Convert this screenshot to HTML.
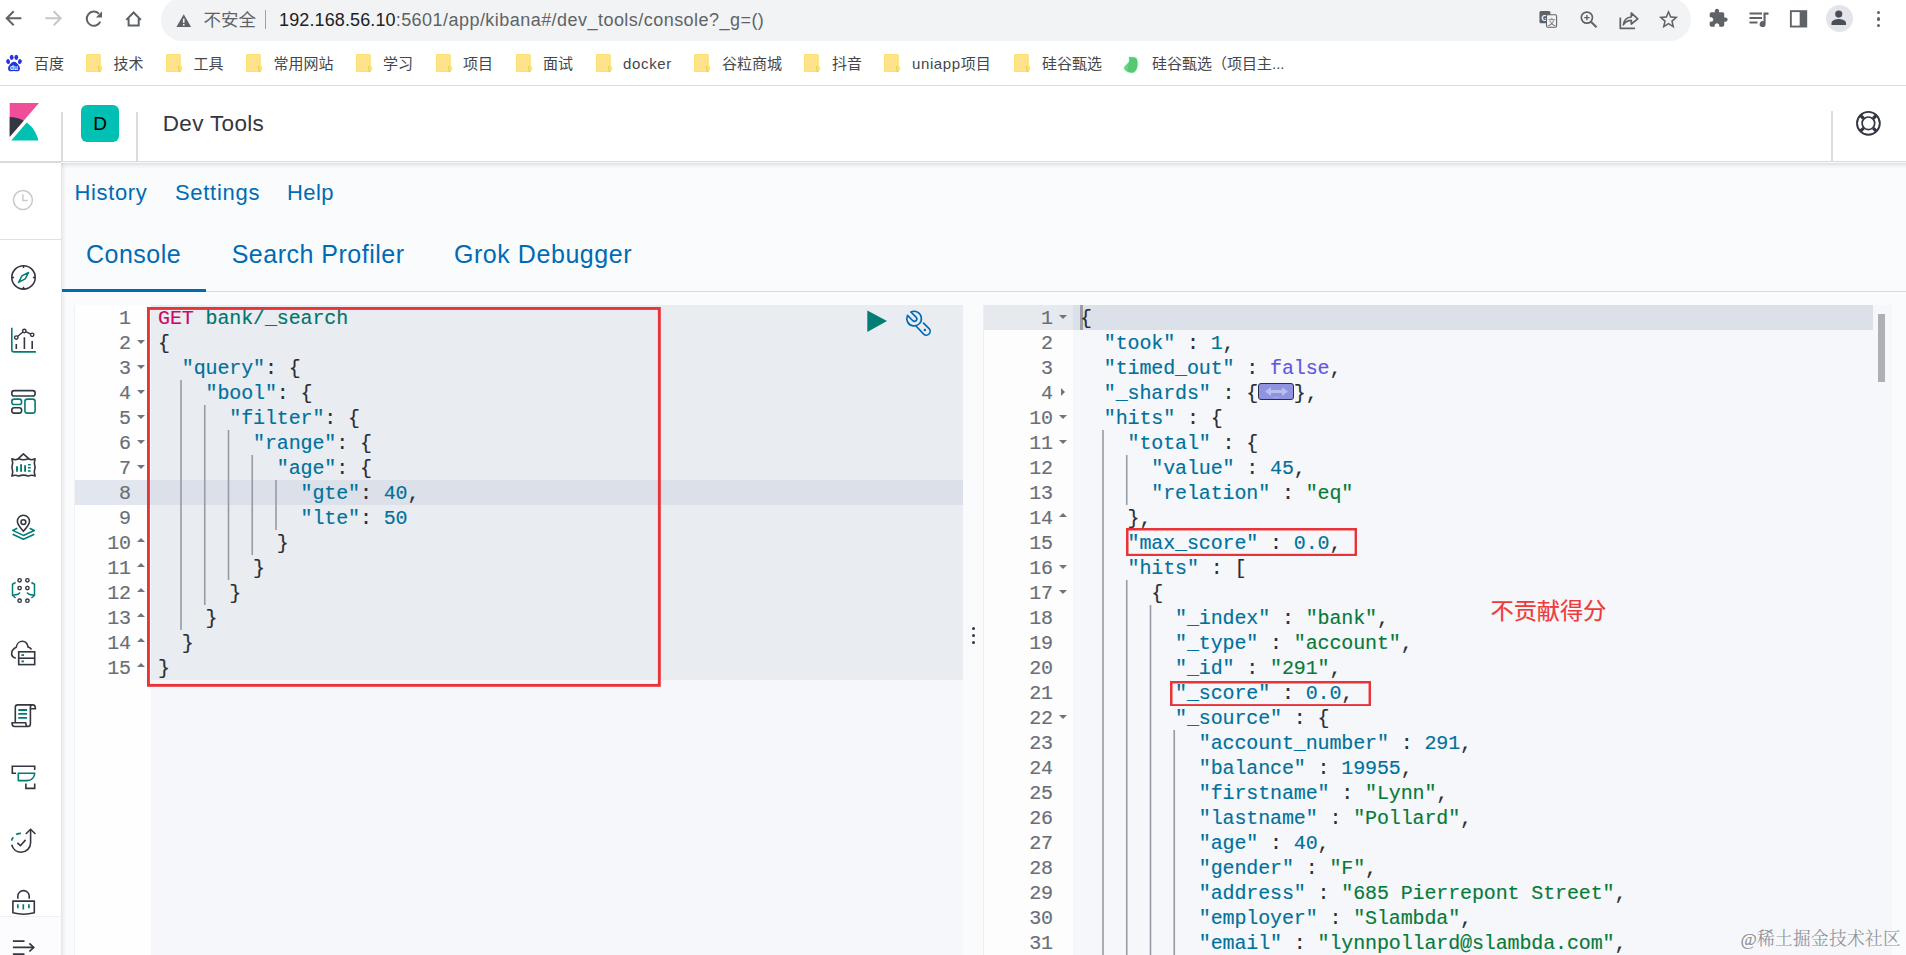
<!DOCTYPE html>
<html lang="zh-CN">
<head>
<meta charset="utf-8">
<title>Dev Tools - Kibana</title>
<style>
*{box-sizing:border-box}
html,body{margin:0;padding:0}
body{width:1906px;height:955px;position:relative;overflow:hidden;background:#fff;
 font-family:"Liberation Sans","Noto Sans CJK SC",sans-serif;color:#343741}
.abs,#chrome>*,#khead>*,#side>*,#main>*{position:absolute}
#chrome{position:absolute;left:0;top:0;width:1906px;height:86px;background:#fff}
#chrome>.line{left:0;top:85px;width:1906px;height:1px;background:#dadce0}
#pill{left:161px;top:-2px;width:1530px;height:42.5px;border-radius:21.25px;background:#f1f3f4}
.bm{top:52.8px;height:22px;line-height:22px;font-size:15px;color:#43474b;white-space:nowrap}
.fo{top:53.8px;width:16.5px;height:18.2px}
#khead{position:absolute;left:0;top:86px;width:1906px;height:76.6px;background:#fff}
#side{position:absolute;left:0;top:162.6px;width:61px;height:792.4px;background:#fff}
#main{position:absolute;left:61px;top:162px;width:1845px;height:793px;background:#fafbfd}
#main>*{position:absolute}
.lnk{color:#006bb4;white-space:nowrap}
/* editor */
#ed{position:absolute;left:0;top:0;width:1906px;height:955px;font-family:"Liberation Mono","DejaVu Sans Mono",monospace;font-size:20px;letter-spacing:-0.125px;-webkit-text-stroke:0.15px currentColor}
#ed>*{position:absolute}
.ln{height:25px;line-height:25px;text-align:right;color:#6b6e76;white-space:pre}
.cl{height:25px;line-height:25px;white-space:pre;color:#2b2d33}
.k,.n{color:#00719c}
.s{color:#087a3a}
.b{color:#5f58e0}
.m{color:#c80a68}
.u{color:#00756c}
.ig{width:1.6px;background:#969ba5}
.fd{width:0;height:0;border-left:4.2px solid transparent;border-right:4.2px solid transparent;border-top:4.6px solid #71747c}
.fu{width:0;height:0;border-left:4.2px solid transparent;border-right:4.2px solid transparent;border-bottom:4.6px solid #71747c}
.fr{width:0;height:0;border-top:4.2px solid transparent;border-bottom:4.2px solid transparent;border-left:4.6px solid #71747c}
.fold{display:inline-block;width:35.6px;height:17px;vertical-align:-1px;background:#8f93e0;border:1.5px solid #2b2d4e;border-radius:3px;position:relative;overflow:hidden}
.fold svg{position:absolute;left:-1.7px;top:-1.5px}
.rb{border:2.5px solid #ea3338;background:transparent}
</style>
</head>
<body>

<!-- ============ browser chrome ============ -->
<div id="chrome">
 <div id="pill"></div>
 <svg style="left:0;top:0" width="160" height="40" viewBox="0 0 160 40" fill="none" stroke-width="2">
  <path d="M21.400 18.300 H7.200 M13.700 11.300 L6.700 18.300 L13.700 25.300" stroke="#5f6368"/>
  <path d="M45.300 18.300 H60.300 M53.700 11.300 L60.700 18.300 L53.700 25.300" stroke="#c4c7cb"/>
  <path d="M100.300 21.600 A7.100 7.100 0 1 1 98.900 13.700" stroke="#5f6368"/>
  <path d="M102 11.300 V17.400 H95.900 Z" fill="#5f6368" stroke="none"/>
  <path d="M126.300 19.900 L133.600 12.500 L140.900 19.900 M128.600 18.500 V25.400 H138.700 V18.500" stroke="#5f6368"/>
 </svg>
 <svg style="left:176px;top:13.5px" width="15.5" height="13.5" viewBox="0 0 15.5 13.5"><path d="M7.750 0.300 L15.200 13.200 H0.300 Z" fill="#5f6368"/><rect x="6.950" y="4.600" width="1.600" height="4.300" fill="#f1f3f4"/><rect x="6.950" y="10" width="1.600" height="1.600" fill="#f1f3f4"/></svg>
 <div style="left:203.5px;top:7px;height:26px;line-height:26px;font-size:17.5px;color:#5f6368;white-space:nowrap">不安全</div>
 <div style="left:264.5px;top:10px;width:1.300px;height:18.500px;background:#9aa0a6"></div>
 <div id="url" style="left:279px;top:6.500px;height:26px;line-height:26px;font-size:18px;color:#202124;white-space:nowrap"><span style="letter-spacing:.12px">192.168.56.10</span><span style="color:#5f6368;letter-spacing:.46px">:5601/app/kibana#/dev_tools/console?_g=()</span></div>
 <svg style="left:5px;top:54px" width="18" height="18" viewBox="0 0 18 18"><g fill="#2932e1"><ellipse cx="3.100" cy="7.600" rx="1.900" ry="2.500" transform="rotate(-15 3.100 7.600)"/><ellipse cx="6.700" cy="3.300" rx="1.900" ry="2.600"/><ellipse cx="11.300" cy="3.300" rx="1.900" ry="2.600"/><ellipse cx="14.900" cy="7.600" rx="1.900" ry="2.500" transform="rotate(15 14.900 7.600)"/><path d="M9 7.800 C11.200 7.800 12.300 9.800 13.800 11.400 C15.600 13.300 15.400 17.300 12.200 17.300 C10.800 17.300 10.200 16.900 9 16.900 C7.800 16.900 7.200 17.300 5.800 17.300 C2.600 17.300 2.400 13.300 4.200 11.400 C5.700 9.800 6.800 7.800 9 7.800 Z"/></g><text x="9" y="15.800" font-size="6.500" font-weight="bold" text-anchor="middle" fill="#fff" font-family="Liberation Sans, sans-serif">du</text></svg>
 <div class="bm" style="left:34px">百度</div>
 <svg class="fo" style="left:86px" viewBox="0 0 16.5 18.200"><path d="M1.500 0 H13.200 Q14.600 0 14.600 1.400 V11.200 Q16.400 12.200 16.400 14.700 Q16.400 17.600 13.800 18.100 H1.500 Q0 18.100 0 16.600 V1.400 Q0 0 1.500 0 Z" fill="#fde38a"/><path d="M1.500 0.450 H13.200 Q14.150 0.450 14.150 1.400 V17.650 H1.500 Q0.450 17.650 0.450 16.600 V1.400 Q0.450 0.450 1.500 0.450 Z" fill="none" stroke="#fbe06c" stroke-width=".9"/><path d="M13 11.600 Q16.300 11.800 16.300 14.800 Q16.300 17.500 13.600 18.100 Q12.200 15.500 13 11.600 Z" fill="#fde96e"/><path d="M13 11.800 Q12.300 15.300 13.500 18" fill="none" stroke="#dcbb4e" stroke-width=".8"/></svg>
 <div class="bm" style="left:113.5px">技术</div>
 <svg class="fo" style="left:166.4px" viewBox="0 0 16.5 18.200"><path d="M1.500 0 H13.200 Q14.600 0 14.600 1.400 V11.200 Q16.400 12.200 16.400 14.700 Q16.400 17.600 13.800 18.100 H1.500 Q0 18.100 0 16.600 V1.400 Q0 0 1.500 0 Z" fill="#fde38a"/><path d="M1.500 0.450 H13.200 Q14.150 0.450 14.150 1.400 V17.650 H1.500 Q0.450 17.650 0.450 16.600 V1.400 Q0.450 0.450 1.500 0.450 Z" fill="none" stroke="#fbe06c" stroke-width=".9"/><path d="M13 11.600 Q16.300 11.800 16.300 14.800 Q16.300 17.500 13.600 18.100 Q12.200 15.500 13 11.600 Z" fill="#fde96e"/><path d="M13 11.800 Q12.300 15.300 13.500 18" fill="none" stroke="#dcbb4e" stroke-width=".8"/></svg>
 <div class="bm" style="left:193.5px">工具</div>
 <svg class="fo" style="left:246.4px" viewBox="0 0 16.5 18.200"><path d="M1.500 0 H13.200 Q14.600 0 14.600 1.400 V11.200 Q16.400 12.200 16.400 14.700 Q16.400 17.600 13.800 18.100 H1.500 Q0 18.100 0 16.600 V1.400 Q0 0 1.500 0 Z" fill="#fde38a"/><path d="M1.500 0.450 H13.200 Q14.150 0.450 14.150 1.400 V17.650 H1.500 Q0.450 17.650 0.450 16.600 V1.400 Q0.450 0.450 1.500 0.450 Z" fill="none" stroke="#fbe06c" stroke-width=".9"/><path d="M13 11.600 Q16.300 11.800 16.300 14.800 Q16.300 17.500 13.600 18.100 Q12.200 15.500 13 11.600 Z" fill="#fde96e"/><path d="M13 11.800 Q12.300 15.300 13.500 18" fill="none" stroke="#dcbb4e" stroke-width=".8"/></svg>
 <div class="bm" style="left:273.5px">常用网站</div>
 <svg class="fo" style="left:356.4px" viewBox="0 0 16.5 18.200"><path d="M1.500 0 H13.200 Q14.600 0 14.600 1.400 V11.200 Q16.400 12.200 16.400 14.700 Q16.400 17.600 13.800 18.100 H1.500 Q0 18.100 0 16.600 V1.400 Q0 0 1.500 0 Z" fill="#fde38a"/><path d="M1.500 0.450 H13.200 Q14.150 0.450 14.150 1.400 V17.650 H1.500 Q0.450 17.650 0.450 16.600 V1.400 Q0.450 0.450 1.500 0.450 Z" fill="none" stroke="#fbe06c" stroke-width=".9"/><path d="M13 11.600 Q16.300 11.800 16.300 14.800 Q16.300 17.500 13.600 18.100 Q12.200 15.500 13 11.600 Z" fill="#fde96e"/><path d="M13 11.800 Q12.300 15.300 13.500 18" fill="none" stroke="#dcbb4e" stroke-width=".8"/></svg>
 <div class="bm" style="left:383px">学习</div>
 <svg class="fo" style="left:436.4px" viewBox="0 0 16.5 18.200"><path d="M1.500 0 H13.200 Q14.600 0 14.600 1.400 V11.200 Q16.400 12.200 16.400 14.700 Q16.400 17.600 13.800 18.100 H1.500 Q0 18.100 0 16.600 V1.400 Q0 0 1.500 0 Z" fill="#fde38a"/><path d="M1.500 0.450 H13.200 Q14.150 0.450 14.150 1.400 V17.650 H1.500 Q0.450 17.650 0.450 16.600 V1.400 Q0.450 0.450 1.500 0.450 Z" fill="none" stroke="#fbe06c" stroke-width=".9"/><path d="M13 11.600 Q16.300 11.800 16.300 14.800 Q16.300 17.500 13.600 18.100 Q12.200 15.500 13 11.600 Z" fill="#fde96e"/><path d="M13 11.800 Q12.300 15.300 13.500 18" fill="none" stroke="#dcbb4e" stroke-width=".8"/></svg>
 <div class="bm" style="left:463px">项目</div>
 <svg class="fo" style="left:516.4px" viewBox="0 0 16.5 18.200"><path d="M1.500 0 H13.200 Q14.600 0 14.600 1.400 V11.200 Q16.400 12.200 16.400 14.700 Q16.400 17.600 13.800 18.100 H1.500 Q0 18.100 0 16.600 V1.400 Q0 0 1.500 0 Z" fill="#fde38a"/><path d="M1.500 0.450 H13.200 Q14.150 0.450 14.150 1.400 V17.650 H1.500 Q0.450 17.650 0.450 16.600 V1.400 Q0.450 0.450 1.500 0.450 Z" fill="none" stroke="#fbe06c" stroke-width=".9"/><path d="M13 11.600 Q16.300 11.800 16.300 14.800 Q16.300 17.500 13.600 18.100 Q12.200 15.500 13 11.600 Z" fill="#fde96e"/><path d="M13 11.800 Q12.300 15.300 13.500 18" fill="none" stroke="#dcbb4e" stroke-width=".8"/></svg>
 <div class="bm" style="left:543px">面试</div>
 <svg class="fo" style="left:596.4px" viewBox="0 0 16.5 18.200"><path d="M1.500 0 H13.200 Q14.600 0 14.600 1.400 V11.200 Q16.400 12.200 16.400 14.700 Q16.400 17.600 13.800 18.100 H1.500 Q0 18.100 0 16.600 V1.400 Q0 0 1.500 0 Z" fill="#fde38a"/><path d="M1.500 0.450 H13.200 Q14.150 0.450 14.150 1.400 V17.650 H1.500 Q0.450 17.650 0.450 16.600 V1.400 Q0.450 0.450 1.500 0.450 Z" fill="none" stroke="#fbe06c" stroke-width=".9"/><path d="M13 11.600 Q16.300 11.800 16.300 14.800 Q16.300 17.500 13.600 18.100 Q12.200 15.500 13 11.600 Z" fill="#fde96e"/><path d="M13 11.800 Q12.300 15.300 13.500 18" fill="none" stroke="#dcbb4e" stroke-width=".8"/></svg>
 <div class="bm" style="left:623px"><span style="letter-spacing:.65px">docker</span></div>
 <svg class="fo" style="left:694.4px" viewBox="0 0 16.5 18.200"><path d="M1.500 0 H13.200 Q14.600 0 14.600 1.400 V11.200 Q16.400 12.200 16.400 14.700 Q16.400 17.600 13.800 18.100 H1.500 Q0 18.100 0 16.600 V1.400 Q0 0 1.500 0 Z" fill="#fde38a"/><path d="M1.500 0.450 H13.200 Q14.150 0.450 14.150 1.400 V17.650 H1.500 Q0.450 17.650 0.450 16.600 V1.400 Q0.450 0.450 1.500 0.450 Z" fill="none" stroke="#fbe06c" stroke-width=".9"/><path d="M13 11.600 Q16.300 11.800 16.300 14.800 Q16.300 17.500 13.600 18.100 Q12.200 15.500 13 11.600 Z" fill="#fde96e"/><path d="M13 11.800 Q12.300 15.300 13.500 18" fill="none" stroke="#dcbb4e" stroke-width=".8"/></svg>
 <div class="bm" style="left:722px">谷粒商城</div>
 <svg class="fo" style="left:804.4px" viewBox="0 0 16.5 18.200"><path d="M1.500 0 H13.200 Q14.600 0 14.600 1.400 V11.200 Q16.400 12.200 16.400 14.700 Q16.400 17.600 13.800 18.100 H1.500 Q0 18.100 0 16.600 V1.400 Q0 0 1.500 0 Z" fill="#fde38a"/><path d="M1.500 0.450 H13.200 Q14.150 0.450 14.150 1.400 V17.650 H1.500 Q0.450 17.650 0.450 16.600 V1.400 Q0.450 0.450 1.500 0.450 Z" fill="none" stroke="#fbe06c" stroke-width=".9"/><path d="M13 11.600 Q16.300 11.800 16.300 14.800 Q16.300 17.500 13.600 18.100 Q12.200 15.500 13 11.600 Z" fill="#fde96e"/><path d="M13 11.800 Q12.300 15.300 13.500 18" fill="none" stroke="#dcbb4e" stroke-width=".8"/></svg>
 <div class="bm" style="left:832px">抖音</div>
 <svg class="fo" style="left:884.4px" viewBox="0 0 16.5 18.200"><path d="M1.500 0 H13.200 Q14.600 0 14.600 1.400 V11.200 Q16.400 12.200 16.400 14.700 Q16.400 17.600 13.800 18.100 H1.500 Q0 18.100 0 16.600 V1.400 Q0 0 1.500 0 Z" fill="#fde38a"/><path d="M1.500 0.450 H13.200 Q14.150 0.450 14.150 1.400 V17.650 H1.500 Q0.450 17.650 0.450 16.600 V1.400 Q0.450 0.450 1.500 0.450 Z" fill="none" stroke="#fbe06c" stroke-width=".9"/><path d="M13 11.600 Q16.300 11.800 16.300 14.800 Q16.300 17.500 13.600 18.100 Q12.200 15.500 13 11.600 Z" fill="#fde96e"/><path d="M13 11.800 Q12.300 15.300 13.500 18" fill="none" stroke="#dcbb4e" stroke-width=".8"/></svg>
 <div class="bm" style="left:912px"><span style="letter-spacing:.6px">uniapp</span>项目</div>
 <svg class="fo" style="left:1014.4px" viewBox="0 0 16.5 18.200"><path d="M1.500 0 H13.200 Q14.600 0 14.600 1.400 V11.200 Q16.400 12.200 16.400 14.700 Q16.400 17.600 13.800 18.100 H1.500 Q0 18.100 0 16.600 V1.400 Q0 0 1.500 0 Z" fill="#fde38a"/><path d="M1.500 0.450 H13.200 Q14.150 0.450 14.150 1.400 V17.650 H1.500 Q0.450 17.650 0.450 16.600 V1.400 Q0.450 0.450 1.500 0.450 Z" fill="none" stroke="#fbe06c" stroke-width=".9"/><path d="M13 11.600 Q16.300 11.800 16.300 14.800 Q16.300 17.500 13.600 18.100 Q12.200 15.500 13 11.600 Z" fill="#fde96e"/><path d="M13 11.800 Q12.300 15.300 13.500 18" fill="none" stroke="#dcbb4e" stroke-width=".8"/></svg>
 <div class="bm" style="left:1042px">硅谷甄选</div>
 <svg style="left:1115px;top:48px;filter:drop-shadow(0 0 1.2px rgba(110,230,150,.7))" width="32" height="30" viewBox="0 0 32 30"><path d="M14.0 9.1 L20.1 9.4 C22.0 10.4 22.9 13.2 22.5 16.3 C22.6 20.1 20.7 24.8 17.0 24.8 C13.8 24.8 11.0 23.2 9.4 20.7 C8.5 19.2 10.4 17.6 12.6 15.7 C13.8 14.4 14.8 12.6 14.3 11.0 C14.1 10.1 13.8 9.4 14.0 9.1 Z" fill="#55c873"/><path d="M9.4 20.1 C10.4 18.2 12.2 16.6 13.5 14.8 C13.8 17.6 13.2 22.0 11.9 22.9 Z" fill="#7bd98a" opacity=".6"/></svg>
 <div class="bm" style="left:1152px">硅谷甄选（项目主...</div>
 <svg style="left:1539px;top:10px" width="18.500" height="18.500" viewBox="0 0 21 21"><rect x="0.500" y="1" width="12.500" height="14" rx="1.800" fill="#5f6368"/><text x="6.700" y="12" font-size="10.500" font-weight="bold" text-anchor="middle" fill="#f1f3f4" font-family="Liberation Sans, sans-serif">G</text><rect x="8.500" y="5.500" width="11.500" height="14" rx="1.500" fill="#f1f3f4" stroke="#5f6368" stroke-width="1.200"/><text x="14.400" y="16.800" font-size="9" text-anchor="middle" fill="#5f6368" font-family="Noto Sans CJK SC, sans-serif">文</text></svg>
 <svg style="left:1579px;top:10px" width="19.500" height="19.500" viewBox="0 0 22 22" fill="none" stroke="#5f6368" stroke-width="1.900"><circle cx="8.900" cy="8.600" r="6.300"/><path d="M13.500 13.300 L19.800 19.500" stroke-width="2.300"/><path d="M5.800 8.600 H12 M8.900 5.500 V11.700" stroke-width="1.600"/></svg>
 <svg style="left:1618px;top:9px" width="22" height="22" viewBox="0 0 22 22" fill="none" stroke="#5f6368" stroke-width="1.700" stroke-linejoin="round"><path d="M2.300 8.500 V19.300 H17"/><path d="M5.300 15.800 C6 11 9 8.300 13.300 8 V4 L19.800 9.800 L13.300 15 V11.300 C10 11.300 7.300 12.800 5.300 15.800 Z"/></svg>
 <svg style="left:1657px;top:7.500px" width="23" height="23" viewBox="0 0 24 24"><path d="M22 9.240l-7.190-.620L12 2 9.190 8.630 2 9.240l5.460 4.730L5.820 21 12 17.270 18.180 21l-1.630-7.030L22 9.240zM12 15.400l-3.760 2.270 1-4.280-3.320-2.880 4.380-.380L12 6.100l1.710 4.040 4.380.380-3.320 2.880 1 4.280L12 15.400z" fill="#5f6368"/></svg>
 <svg style="left:1708.300px;top:8px" width="20.500" height="20.500" viewBox="0 0 24 24"><path d="M20.500 11H19V7c0-1.100-.900-2-2-2h-4V3.500C13 2.120 11.880 1 10.500 1S8 2.120 8 3.500V5H4c-1.100 0-1.990.900-1.990 2v3.800H3.500c1.490 0 2.700 1.210 2.700 2.700s-1.210 2.700-2.700 2.700H2V20c0 1.100.900 2 2 2h3.800v-1.500c0-1.490 1.210-2.700 2.700-2.700 1.490 0 2.700 1.210 2.700 2.700V22H17c1.100 0 2-.900 2-2v-4h1.500c1.380 0 2.500-1.120 2.500-2.500S21.880 11 20.500 11z" fill="#5f6368"/></svg>
 <svg style="left:1746.500px;top:7.500px" width="24" height="24" viewBox="0 0 24 24"><path d="M2.500 4.500 H15 V6.600 H2.500 Z M2.500 9 H15 V11.100 H2.500 Z M2.500 13.500 H10.500 V15.600 H2.500 Z" fill="#5f6368"/><path d="M16.500 4.500 H21.500 V6.700 H18.600 V16 A3 3 0 1 1 16.500 13.200 Z" fill="#5f6368"/></svg>
 <svg style="left:1789px;top:9px" width="19.500" height="19.500" viewBox="0 0 21 21"><rect x="2" y="2.300" width="16.600" height="16.600" fill="none" stroke="#5f6368" stroke-width="2"/><rect x="11.500" y="2.300" width="7.100" height="16.600" fill="#5f6368"/></svg>
 <div style="left:1825.500px;top:5px;width:27px;height:27px;border-radius:50%;background:#e3e5eb"></div>
 <svg style="left:1830.300px;top:9.200px" width="17.500" height="17.500" viewBox="0 0 18 18"><circle cx="9" cy="5.200" r="3.700" fill="#4a4e57"/><path d="M1.500 16.500 V14.500 C1.500 11.500 6.500 10.300 9 10.300 C11.500 10.300 16.500 11.500 16.500 14.500 V16.500 Z" fill="#4a4e57"/></svg>
 <div style="left:1876.600px;top:10.500px;width:3.800px;height:3.800px;border-radius:50%;background:#5f6368"></div>
 <div style="left:1876.600px;top:17.100px;width:3.800px;height:3.800px;border-radius:50%;background:#5f6368"></div>
 <div style="left:1876.600px;top:23.700px;width:3.800px;height:3.800px;border-radius:50%;background:#5f6368"></div>
 <div class="line"></div>
</div>

<!-- ============ kibana header ============ -->
<div id="khead">
 <svg style="left:4.700px;top:17px" width="37.600" height="37.600" viewBox="0 0 32 32"><path fill="#f04e98" d="M4 0v28.789L28.935.017z"/><path fill="#343741" d="M4 12v16.789l11.906-13.738A24.721 24.721 0 0 0 4 12"/><path fill="#00bfb3" d="M18.479 16.664L6.268 30.754l-1.073 1.237h23.191c-1.252-6.292-4.883-11.719-9.908-15.327"/></svg>
 <div style="left:61.200px;top:25.500px;width:1.800px;height:50px;background:#d9dce1"></div>
 <div style="left:136.100px;top:25.500px;width:1.800px;height:50px;background:#d9dce1"></div>
 <div style="left:81px;top:19px;width:38px;height:37px;border-radius:6px;background:#00bfb3;color:#000;font-size:19px;line-height:37px;text-align:center;font-weight:500">D</div>
 <div style="left:162.700px;top:22.800px;height:30px;line-height:30px;font-size:22.500px;letter-spacing:.35px;color:#343741;white-space:nowrap">Dev Tools</div>
 <div style="left:1831px;top:25px;width:1.800px;height:50.500px;background:#d9dce1"></div>
 <svg style="left:1855px;top:24px" width="27" height="27" viewBox="0 0 27 27" fill="none" stroke="#343741"><circle cx="13.400" cy="13.300" r="11.400" stroke-width="1.900"/><circle cx="13.400" cy="13.300" r="6.300" stroke-width="1.700"/><path d="M8.600 8.500 L5.500 5.400 M18.200 8.500 L21.300 5.400 M8.600 18.100 L5.500 21.200 M18.200 18.100 L21.300 21.200" stroke-width="3.200"/></svg>
 <div style="left:0;top:75px;width:1906px;height:1.600px;background:#d8dadf"></div>
</div>

<!-- ============ main ============ -->
<div id="main">
 <div style="left:-61px;top:-162px;width:1906px;height:955px">
  <div class="lnk abs" style="left:74.500px;top:177.700px;height:30px;line-height:30px;font-size:22px;letter-spacing:.65px">History</div>
  <div class="lnk abs" style="left:175px;top:177.700px;height:30px;line-height:30px;font-size:22px;letter-spacing:.7px">Settings</div>
  <div class="lnk abs" style="left:287px;top:177.700px;height:30px;line-height:30px;font-size:22px;letter-spacing:.4px">Help</div>
  <div class="lnk abs" style="left:86px;top:239px;height:30px;line-height:30px;font-size:25px;letter-spacing:.5px">Console</div>
  <div class="lnk abs" style="left:231.700px;top:239px;height:30px;line-height:30px;font-size:25px;letter-spacing:.5px">Search Profiler</div>
  <div class="lnk abs" style="left:454px;top:239px;height:30px;line-height:30px;font-size:25px;letter-spacing:.55px">Grok Debugger</div>
  <div class="abs" style="left:61px;top:162.600px;width:1845px;height:6px;background:linear-gradient(to bottom,rgba(150,155,165,.3),rgba(150,155,165,.1) 45%,rgba(150,155,165,0))"></div>
  <div class="abs" style="left:61px;top:162.600px;width:5px;height:793px;background:linear-gradient(to right,rgba(135,135,140,.19),rgba(135,135,140,.08) 50%,rgba(135,135,140,0))"></div>
  <div class="abs" style="left:73.800px;top:305px;width:1.400px;height:650px;background:#eff1f4"></div>
  <div class="abs" style="left:61.500px;top:291px;width:1845px;height:1.200px;background:#d3dae6"></div>
  <div class="abs" style="left:61.500px;top:289px;width:144.500px;height:3.200px;background:#006bb4"></div>
 </div>
</div>

<!-- ============ sidebar ============ -->
<div id="side">
 <div style="left:0;top:-162.600px;width:62px;height:955px">
 <div class="abs" style="left:0;top:238.700px;width:61.500px;height:1.300px;background:#dfe1e6"></div>
 <svg class="abs" style="left:10px;top:186.5px" width="26" height="26" viewBox="0 0 26 26" fill="none" stroke-width="1.600" ><circle cx="12.900" cy="13.100" r="9.500" stroke="#c9cacd" stroke-width="1.500"/><path d="M12.900 7.300 V13.600 H17.600" stroke="#c9cacd" stroke-width="1.500"/></svg>
 <svg class="abs" style="left:10px;top:264px" width="27" height="27" viewBox="0 0 27 27" fill="none" stroke-width="1.600" ><circle cx="13.500" cy="13.400" r="11.700" stroke="#343741"/><path d="M13.500 1.700 V4 M13.500 22.800 V25.100 M1.800 13.400 H4.100 M22.900 13.400 H25.200" stroke="#343741" stroke-width="1.500"/><path d="M18.600 8.500 L15.200 14.900 L8.600 18.400 L11.900 11.900 Z" stroke="#017d73" stroke-width="1.500" stroke-linejoin="round"/></svg>
 <svg class="abs" style="left:10px;top:326px" width="28" height="28" viewBox="0 0 28 28" fill="none" stroke-width="1.600" ><path d="M1.800 1.800 V23.700 Q1.800 25.900 4 25.900 H25.900" stroke="#017d73"/><path d="M6.300 17.900 V22.900 M14.400 11.300 V22.900 M22.200 15.100 V22.900" stroke="#343741"/><path d="M7.500 10.500 L12.900 6 M15.900 5.700 L20.700 8.100" stroke="#343741" stroke-width="1.400"/><circle cx="6.300" cy="11.600" r="1.700" stroke="#343741" stroke-width="1.400"/><circle cx="14.300" cy="5" r="1.700" stroke="#343741" stroke-width="1.400"/><circle cx="22.200" cy="8.800" r="1.700" stroke="#343741" stroke-width="1.400"/></svg>
 <svg class="abs" style="left:10px;top:389px" width="28" height="26" viewBox="0 0 28 26" fill="none" stroke-width="1.600" ><rect x="1.800" y="1.600" width="23.300" height="5.400" rx="2.300" stroke="#343741"/><rect x="1.800" y="10.100" width="9.800" height="5.400" rx="2.300" stroke="#017d73"/><rect x="1.800" y="18.700" width="9.800" height="5.400" rx="2.300" stroke="#343741"/><rect x="14.900" y="10.100" width="10.200" height="14" rx="2.300" stroke="#017d73"/></svg>
 <svg class="abs" style="left:10px;top:452px" width="28" height="27" viewBox="0 0 28 27" fill="none" stroke-width="1.600" ><path d="M8 6.900 L13.400 1.900 L19 6.900" stroke="#343741" stroke-linejoin="round"/><path d="M1.900 6.800 Q5 8.600 8.700 6.800 Q13.400 8.800 18.300 6.800 Q21.800 8.600 25.100 6.800 Q23.500 11 25.100 15.300 Q23.500 19.800 25.100 24.100 Q21.800 22.300 18.300 24.100 Q13.400 22.200 8.700 24.100 Q5 22.300 1.900 24.100 Q3.500 19.800 1.900 15.300 Q3.500 11 1.900 6.800 Z" stroke="#343741" stroke-linejoin="round"/><path d="M7 14.300 V19.700 M11.100 12.300 V19.700 M15.100 13.300 V19.700" stroke="#017d73" stroke-width="1.900"/><path d="M18 12.700 H20.700 M18 15.700 H20.700 M18 18.900 H20.700" stroke="#017d73" stroke-width="1.500"/></svg>
 <svg class="abs" style="left:10px;top:513px" width="28" height="28" viewBox="0 0 28 28" fill="none" stroke-width="1.600" ><path d="M13.400 18.300 C10.500 14.600 7.400 12 7.400 8.300 A6 6 0 0 1 19.500 8.300 C19.500 12 16.300 14.600 13.400 18.300 Z" stroke="#343741" stroke-linejoin="round"/><circle cx="13.400" cy="9.100" r="2.400" stroke="#343741"/><path d="M7.300 15.300 L2.700 17.400 L13.400 22.400 L24.300 17.400 L19.600 15.300" stroke="#017d73" stroke-linejoin="round"/><path d="M2.700 21.300 L13.400 26.300 L24.300 21.300" stroke="#017d73" stroke-linejoin="round"/></svg>
 <svg class="abs" style="left:10px;top:576px" width="28" height="28" viewBox="0 0 28 28" fill="none" stroke-width="1.600" ><g stroke="#343741" stroke-width="1.400"><circle cx="9.600" cy="4.300" r="1.700"/><circle cx="17.400" cy="4.300" r="1.700"/><circle cx="9.600" cy="12.100" r="1.700"/><circle cx="17.400" cy="12.100" r="1.700"/><circle cx="9.600" cy="24.700" r="1.700"/><circle cx="17.400" cy="24.700" r="1.700"/></g><g stroke="#017d73" stroke-width="1.500"><path d="M5.600 6.500 L2.500 8.300 V19.200 L5.600 22"/><path d="M2.500 19.200 C6 18.800 9.400 18.800 9.700 16.300"/><path d="M21.400 6.500 L24.500 8.300 V19.200 L21.400 22"/><path d="M24.500 19.200 C21 18.800 17.600 18.800 17.300 16.300"/></g></svg>
 <svg class="abs" style="left:10px;top:639px" width="28" height="28" viewBox="0 0 28 28" fill="none" stroke-width="1.600" ><path d="M5.800 19.300 C2.500 18.300 1.400 15.800 1.700 13.800 C2 10.800 4.300 9.300 6.200 8.300 C6.800 4.300 9.800 2.300 12.300 2.300 C15 2.300 17.300 4 18 8 C19.300 8.400 20.700 9.300 21.500 10.500" stroke="#343741"/><rect x="8.700" y="12.800" width="16" height="12.800" stroke="#343741"/><path d="M8.700 19.200 H24.700" stroke="#343741"/><path d="M11.400 16.100 H14 M11.400 22.300 H14" stroke="#017d73" stroke-width="1.700"/></svg>
 <svg class="abs" style="left:10px;top:702px" width="28" height="28" viewBox="0 0 28 28" fill="none" stroke-width="1.600" ><path d="M5.300 20.500 V5.300 Q5.300 2.900 7.700 2.900 H22.900 Q25.400 2.900 25.400 6.700 H20.400 V5 Q20.400 2.900 22.900 2.900" stroke="#343741"/><path d="M20.400 6.700 V21.700 Q20.400 24.500 18 24.500 Q15.800 24.500 15.800 20.800 H2 Q2 24.500 4.500 24.500 H18" stroke="#343741" stroke-linejoin="round"/><path d="M8.300 8 H17.100 M8.300 11.900 H17.100 M8.300 15.900 H17.100" stroke="#017d73" stroke-width="1.800"/></svg>
 <svg class="abs" style="left:10px;top:764px" width="28" height="28" viewBox="0 0 28 28" fill="none" stroke-width="1.600" ><path d="M6.100 9.300 H2.300 V2.300 H24.700 V6.100" stroke="#343741"/><path d="M8.300 9.300 H24.700 C24.700 13.500 21.300 16.600 17.100 16.600 H8.300 Z" stroke="#017d73" stroke-linejoin="round"/><path d="M15.900 19.400 V24.400 H24.700 V19.400" stroke="#343741"/></svg>
 <svg class="abs" style="left:10px;top:827px" width="28" height="28" viewBox="0 0 28 28" fill="none" stroke-width="1.600" ><path d="M1.700 17.700 C3 22.500 7 25.200 11 25.200 C16.500 25.200 20.600 21 20.600 15.700 V2.600" stroke="#343741"/><path d="M15.800 7 L20.600 2.300 L25.400 7" stroke="#343741"/><path d="M7.300 15.900 L10.400 18.700 L15.600 12.900" stroke="#343741"/><path d="M1.600 13.600 C1.900 12.300 2.500 11.300 3.300 10.300 M6.100 7.600 C7.500 6.800 9.200 6.300 10.900 6.300" stroke="#017d73" stroke-width="1.700"/></svg>
 <svg class="abs" style="left:10px;top:888px" width="28" height="28" viewBox="0 0 28 28" fill="none" stroke-width="1.600" ><path d="M7.800 10.700 V8.300 A5.700 5.700 0 0 1 19.200 8.300 V10.700" stroke="#343741"/><path d="M2.900 13.100 H24.300 V24.800 Q13.600 27.600 2.900 24.800 Z" stroke="#343741" stroke-linejoin="round"/><path d="M7.800 16.300 V20.300 M13.300 16.300 V21.600 M18.900 16.300 V20.300" stroke="#017d73" stroke-width="1.700"/></svg>
 <div class="abs" style="left:0;top:915.600px;width:61px;height:1.400px;background:#eef0f3"></div><div class="abs" style="left:0;top:917px;width:61px;height:38px;background:#fcfcfe"></div>
 <svg class="abs" style="left:10px;top:936px" width="28" height="19" viewBox="0 0 28 19" fill="none" stroke-width="1.600" ><path d="M2.900 5.200 H14.500 M2.900 11.400 H23.500 M2.900 18.100 H14.500" stroke="#343741" stroke-width="1.700"/><path d="M19.400 7.300 L23.700 11.400 L19.400 15.500" stroke="#343741" stroke-width="1.700"/></svg>
 </div>
</div>

<!-- ============ editors ============ -->
<div id="ed">
 
 <!-- left editor backgrounds -->
 <div style="left:75px;top:305px;width:76px;height:650px;background:#fefefe"></div>
 <div style="left:151px;top:305px;width:812px;height:375px;background:#e9ecf1"></div>
 <div style="left:151px;top:680px;width:812px;height:275px;background:#f5f7fa"></div>
 <div style="left:75px;top:480px;width:76px;height:25px;background:#e2e6ee"></div>
 <div style="left:151px;top:480px;width:812px;height:25px;background:#dbe0e9"></div>
 <!-- right editor backgrounds -->
 <div style="left:983.300px;top:305px;width:1.400px;height:650px;background:#eceef2"></div>
 <div style="left:984px;top:305px;width:908px;height:650px;background:#f5f7fa"></div>
 <div style="left:984px;top:305px;width:89px;height:650px;background:#fdfdfe"></div>
 <div style="left:984px;top:305px;width:89px;height:25px;background:#e6e9ee"></div>
 <div style="left:1073px;top:305px;width:800px;height:25px;background:#dce1e9"></div>
 <div style="left:1080px;top:305px;width:2.5px;height:25px;background:#9b9ea8"></div>
 <div style="left:1878px;top:314px;width:7px;height:68px;background:#aeb0b6"></div>
 <!-- resizer dots -->
 <div style="left:971.7px;top:626.5px;width:3px;height:3px;border-radius:50%;background:#343741"></div>
 <div style="left:971.7px;top:633.5px;width:3px;height:3px;border-radius:50%;background:#343741"></div>
 <div style="left:971.7px;top:640.5px;width:3px;height:3px;border-radius:50%;background:#343741"></div>

 <div class="ln" style="left:75px;width:56px;top:306.0px">1</div><div class="cl" style="left:158.00px;top:306.0px"><span class="m">GET</span> <span class="u">bank/_search</span></div><div class="ln" style="left:75px;width:56px;top:331.0px">2</div><i class="fd" style="left:137.0px;top:339.5px"></i><div class="cl" style="left:158.00px;top:331.0px">{</div><div class="ln" style="left:75px;width:56px;top:356.0px">3</div><i class="fd" style="left:137.0px;top:364.5px"></i><div class="cl" style="left:158.00px;top:356.0px">  <span class="k">"query"</span>: {</div><div class="ln" style="left:75px;width:56px;top:381.0px">4</div><i class="fd" style="left:137.0px;top:389.5px"></i><div class="cl" style="left:158.00px;top:381.0px">    <span class="k">"bool"</span>: {</div><div class="ln" style="left:75px;width:56px;top:406.0px">5</div><i class="fd" style="left:137.0px;top:414.5px"></i><div class="cl" style="left:158.00px;top:406.0px">      <span class="k">"filter"</span>: {</div><div class="ln" style="left:75px;width:56px;top:431.0px">6</div><i class="fd" style="left:137.0px;top:439.5px"></i><div class="cl" style="left:158.00px;top:431.0px">        <span class="k">"range"</span>: {</div><div class="ln" style="left:75px;width:56px;top:456.0px">7</div><i class="fd" style="left:137.0px;top:464.5px"></i><div class="cl" style="left:158.00px;top:456.0px">          <span class="k">"age"</span>: {</div><div class="ln" style="left:75px;width:56px;top:481.0px">8</div><div class="cl" style="left:158.00px;top:481.0px">            <span class="k">"gte"</span>: <span class="n">40</span>,</div><div class="ln" style="left:75px;width:56px;top:506.0px">9</div><div class="cl" style="left:158.00px;top:506.0px">            <span class="k">"lte"</span>: <span class="n">50</span></div><div class="ln" style="left:75px;width:56px;top:531.0px">10</div><i class="fu" style="left:137.0px;top:538.3px"></i><div class="cl" style="left:158.00px;top:531.0px">          }</div><div class="ln" style="left:75px;width:56px;top:556.0px">11</div><i class="fu" style="left:137.0px;top:563.3px"></i><div class="cl" style="left:158.00px;top:556.0px">        }</div><div class="ln" style="left:75px;width:56px;top:581.0px">12</div><i class="fu" style="left:137.0px;top:588.3px"></i><div class="cl" style="left:158.00px;top:581.0px">      }</div><div class="ln" style="left:75px;width:56px;top:606.0px">13</div><i class="fu" style="left:137.0px;top:613.3px"></i><div class="cl" style="left:158.00px;top:606.0px">    }</div><div class="ln" style="left:75px;width:56px;top:631.0px">14</div><i class="fu" style="left:137.0px;top:638.3px"></i><div class="cl" style="left:158.00px;top:631.0px">  }</div><div class="ln" style="left:75px;width:56px;top:656.0px">15</div><i class="fu" style="left:137.0px;top:663.3px"></i><div class="cl" style="left:158.00px;top:656.0px">}</div><div class="ln" style="left:984px;width:69px;top:306.0px">1</div><i class="fd" style="left:1059.0px;top:314.5px"></i><div class="cl" style="left:1080.00px;top:306.0px">{</div><div class="ln" style="left:984px;width:69px;top:331.0px">2</div><div class="cl" style="left:1080.00px;top:331.0px">  <span class="k">"took"</span> : <span class="n">1</span>,</div><div class="ln" style="left:984px;width:69px;top:356.0px">3</div><div class="cl" style="left:1080.00px;top:356.0px">  <span class="k">"timed_out"</span> : <span class="b">false</span>,</div><div class="ln" style="left:984px;width:69px;top:381.0px">4</div><i class="fr" style="left:1060.5px;top:388.0px"></i><div class="cl" style="left:1080.00px;top:381.0px">  <span class="k">"_shards"</span> : {<span class="fold"><svg width="36" height="17" viewBox="0 0 36 17"><path d="M7 8.5 L13 4 V7 H24 V4 L30 8.5 L24 13 V10 H13 V13 Z" fill="#b9bdf0"/><text x="18" y="14.5" font-size="8" text-anchor="middle" fill="#d8dafa" font-family="Liberation Sans, sans-serif">...</text></svg></span>},</div><div class="ln" style="left:984px;width:69px;top:406.0px">10</div><i class="fd" style="left:1059.0px;top:414.5px"></i><div class="cl" style="left:1080.00px;top:406.0px">  <span class="k">"hits"</span> : {</div><div class="ln" style="left:984px;width:69px;top:431.0px">11</div><i class="fd" style="left:1059.0px;top:439.5px"></i><div class="cl" style="left:1080.00px;top:431.0px">    <span class="k">"total"</span> : {</div><div class="ln" style="left:984px;width:69px;top:456.0px">12</div><div class="cl" style="left:1080.00px;top:456.0px">      <span class="k">"value"</span> : <span class="n">45</span>,</div><div class="ln" style="left:984px;width:69px;top:481.0px">13</div><div class="cl" style="left:1080.00px;top:481.0px">      <span class="k">"relation"</span> : <span class="s">"eq"</span></div><div class="ln" style="left:984px;width:69px;top:506.0px">14</div><i class="fu" style="left:1059.0px;top:513.3px"></i><div class="cl" style="left:1080.00px;top:506.0px">    },</div><div class="ln" style="left:984px;width:69px;top:531.0px">15</div><div class="cl" style="left:1080.00px;top:531.0px">    <span class="k">"max_score"</span> : <span class="n">0.0</span>,</div><div class="ln" style="left:984px;width:69px;top:556.0px">16</div><i class="fd" style="left:1059.0px;top:564.5px"></i><div class="cl" style="left:1080.00px;top:556.0px">    <span class="k">"hits"</span> : [</div><div class="ln" style="left:984px;width:69px;top:581.0px">17</div><i class="fd" style="left:1059.0px;top:589.5px"></i><div class="cl" style="left:1080.00px;top:581.0px">      {</div><div class="ln" style="left:984px;width:69px;top:606.0px">18</div><div class="cl" style="left:1080.00px;top:606.0px">        <span class="k">"_index"</span> : <span class="s">"bank"</span>,</div><div class="ln" style="left:984px;width:69px;top:631.0px">19</div><div class="cl" style="left:1080.00px;top:631.0px">        <span class="k">"_type"</span> : <span class="s">"account"</span>,</div><div class="ln" style="left:984px;width:69px;top:656.0px">20</div><div class="cl" style="left:1080.00px;top:656.0px">        <span class="k">"_id"</span> : <span class="s">"291"</span>,</div><div class="ln" style="left:984px;width:69px;top:681.0px">21</div><div class="cl" style="left:1080.00px;top:681.0px">        <span class="k">"_score"</span> : <span class="n">0.0</span>,</div><div class="ln" style="left:984px;width:69px;top:706.0px">22</div><i class="fd" style="left:1059.0px;top:714.5px"></i><div class="cl" style="left:1080.00px;top:706.0px">        <span class="k">"_source"</span> : {</div><div class="ln" style="left:984px;width:69px;top:731.0px">23</div><div class="cl" style="left:1080.00px;top:731.0px">          <span class="k">"account_number"</span> : <span class="n">291</span>,</div><div class="ln" style="left:984px;width:69px;top:756.0px">24</div><div class="cl" style="left:1080.00px;top:756.0px">          <span class="k">"balance"</span> : <span class="n">19955</span>,</div><div class="ln" style="left:984px;width:69px;top:781.0px">25</div><div class="cl" style="left:1080.00px;top:781.0px">          <span class="k">"firstname"</span> : <span class="s">"Lynn"</span>,</div><div class="ln" style="left:984px;width:69px;top:806.0px">26</div><div class="cl" style="left:1080.00px;top:806.0px">          <span class="k">"lastname"</span> : <span class="s">"Pollard"</span>,</div><div class="ln" style="left:984px;width:69px;top:831.0px">27</div><div class="cl" style="left:1080.00px;top:831.0px">          <span class="k">"age"</span> : <span class="n">40</span>,</div><div class="ln" style="left:984px;width:69px;top:856.0px">28</div><div class="cl" style="left:1080.00px;top:856.0px">          <span class="k">"gender"</span> : <span class="s">"F"</span>,</div><div class="ln" style="left:984px;width:69px;top:881.0px">29</div><div class="cl" style="left:1080.00px;top:881.0px">          <span class="k">"address"</span> : <span class="s">"685 Pierrepont Street"</span>,</div><div class="ln" style="left:984px;width:69px;top:906.0px">30</div><div class="cl" style="left:1080.00px;top:906.0px">          <span class="k">"employer"</span> : <span class="s">"Slambda"</span>,</div><div class="ln" style="left:984px;width:69px;top:931.0px">31</div><div class="cl" style="left:1080.00px;top:931.0px">          <span class="k">"email"</span> : <span class="s">"lynnpollard@slambda.com"</span>,</div><svg style="left:0;top:0" width="1906" height="955" viewBox="0 0 1906 955"><path d="M181.00 380 V630 M204.75 405 V605 M228.50 430 V580 M252.25 455 V555 M276.00 480 V530 M1103.00 430 V955 M1126.75 455 V505 M1126.75 580 V955 M1150.50 605 V955 M1174.25 730 V955" fill="none" stroke="#969ba5" stroke-width="1.6"/></svg>
 
 <!-- red annotation rectangles -->
 <svg style="left:147.2px;top:307px" width="513.8" height="379.8" viewBox="0 0 513.8 379.8"><rect x="1.45" y="1.45" width="510.9" height="376.9" fill="none" stroke="#ea3338" stroke-width="2.9"/></svg>
 <svg style="left:1126.2px;top:527.6px" width="231.1" height="28.3" viewBox="0 0 231.1 28.3"><rect x="1.25" y="1.25" width="228.6" height="25.8" fill="none" stroke="#ea3338" stroke-width="2.5"/></svg>
 <svg style="left:1169.8px;top:680.5px" width="201.1" height="25.6" viewBox="0 0 201.1 25.6"><rect x="1.25" y="1.25" width="198.6" height="23.1" fill="none" stroke="#ea3338" stroke-width="2.5"/></svg>
 <div style="left:1490.500px;top:596.300px;height:30px;line-height:30px;font-size:23.250px;color:#ee3a3a;white-space:nowrap;font-family:'Liberation Sans','Noto Sans CJK SC',sans-serif">不贡献得分</div>
 <!-- run + wrench -->
 <svg style="left:866px;top:309px" width="23" height="24" viewBox="0 0 23 24"><path d="M1.3 1.5 L21 12 L1.3 23 Z" fill="#017d73"/></svg>
 <svg style="left:900px;top:305px" width="36" height="34" viewBox="0 0 36 34" fill="none" stroke="#006bb4" stroke-width="1.650" stroke-linecap="round" stroke-linejoin="round"><path d="M10.92 7.03 L16.22 12.33 A2.40 2.40 0 0 1 12.83 15.72 L7.53 10.42 A7.30 7.30 0 1 0 10.92 7.03"/><path d="M15.76 20.71 L23.68 29.12 A3.85 3.85 0 0 0 29.12 23.68 L23.50 18.10"/><circle cx="24.900" cy="24.900" r="1.250" fill="#006bb4" stroke="none"/></svg>
 <!-- watermark -->
 <div style="left:1740.500px;top:925.500px;height:26px;line-height:26px;font-size:17.700px;letter-spacing:.3px;font-weight:300;color:#8e9096;white-space:nowrap;font-family:'Liberation Serif','Noto Serif CJK SC',serif;text-shadow:0 0 1.500px #fff,0 0 1.500px #fff">@稀土掘金技术社区</div>

</div>

</body>
</html>
